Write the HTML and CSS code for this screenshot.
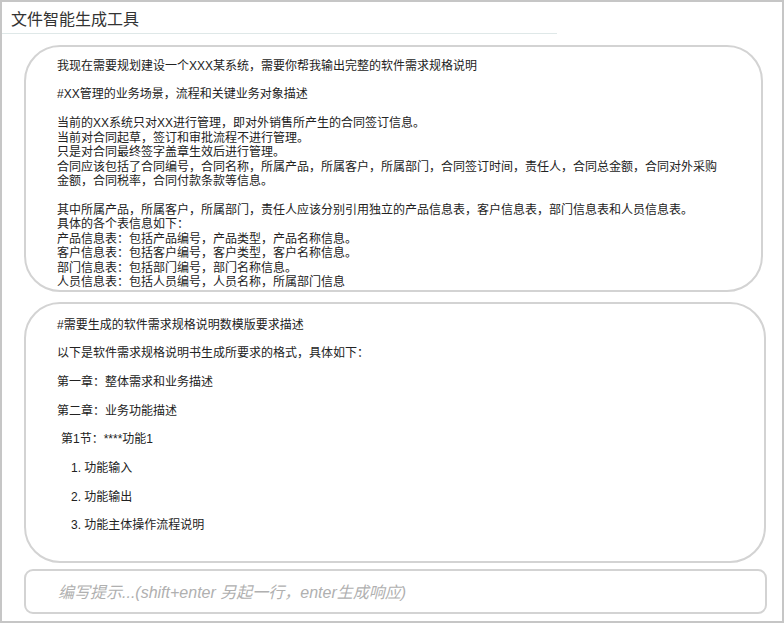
FILE: index.html
```html
<!DOCTYPE html>
<html lang="zh-CN">
<head>
<meta charset="utf-8">
<title>文件智能生成工具</title>
<link rel="stylesheet" href="styles.css">
</head>
<body>
<div class="app">
  <header class="header"><h1 class="title">文件智能生成工具</h1></header>
  <main class="chat">
    <section class="bubble bubble-first">
      <p>我现在需要规划建设一个XXX某系统，需要你帮我输出完整的软件需求规格说明</p>
      <p>#XX管理的业务场景，流程和关键业务对象描述</p>
      <p>当前的XX系统只对XX进行管理，即对外销售所产生的合同签订信息。<br>当前对合同起草，签订和审批流程不进行管理。<br>只是对合同最终签字盖章生效后进行管理。<br>合同应该包括了合同编号，合同名称，所属产品，所属客户，所属部门，合同签订时间，责任人，合同总金额，合同对外采购金额，合同税率，合同付款条款等信息。</p>
      <p>其中所属产品，所属客户，所属部门，责任人应该分别引用独立的产品信息表，客户信息表，部门信息表和人员信息表。<br>具体的各个表信息如下：<br>产品信息表：包括产品编号，产品类型，产品名称信息。<br>客户信息表：包括客户编号，客户类型，客户名称信息。<br>部门信息表：包括部门编号，部门名称信息。<br>人员信息表：包括人员编号，人员名称，所属部门信息</p>
    </section>
    <section class="bubble bubble-second">
      <p>#需要生成的软件需求规格说明数模版要求描述</p>
      <p>以下是软件需求规格说明书生成所要求的格式，具体如下：</p>
      <p>第一章：整体需求和业务描述</p>
      <p>第二章：业务功能描述</p>
      <p class="sub">第1节：****功能1</p>
      <p class="item">1. 功能输入</p>
      <p class="item">2. 功能输出</p>
      <p class="item">3. 功能主体操作流程说明</p>
    </section>
    <div class="prompt">编写提示...(shift+enter 另起一行，enter生成响应)</div>
  </main>
</div>
</body>
</html>
```
FILE: styles.css
```css
html, body {
  margin: 0;
  padding: 0;
  background: #ffffff;
}
.app {
  width: 784px;
  height: 623px;
  box-sizing: border-box;
  border: 2px solid #c6c6c6;
  font-family: "Liberation Sans", "Noto Sans CJK SC", sans-serif;
  color: #222;
  display: flex;
  flex-direction: column;
}
.header {
  flex-shrink: 0;
  width: 555px;
  height: 32px;
  box-sizing: border-box;
  border-bottom: 1px solid #dfe8e8;
  padding-left: 9px;
  display: flex;
  align-items: center;
}
.title {
  margin: 0;
  font-size: 16px;
  font-weight: normal;
  color: #333;
  line-height: 20px;
  font-family: "Noto Sans CJK SC", sans-serif;
}
.chat {
  flex-shrink: 0;
  display: flex;
  flex-direction: column;
  padding: 11px 0 0 22px;
}
.bubble {
  flex-shrink: 0;
  border: 2px solid #d3d3d3;
  border-radius: 36px;
  box-sizing: border-box;
  font-size: 12px;
  line-height: 14.45px;
}
.bubble p {
  margin: 0;
}
.bubble-first {
  width: 739px;
  padding: 11.5px 40px 0 31px;
}
.bubble-first p + p {
  margin-top: 14.45px;
}
.bubble-second {
  width: 742px;
  margin-top: 10px;
  padding: 14px 40px 28px 31px;
  display: flex;
  flex-direction: column;
  gap: 14.2px;
}
.bubble-second .sub {
  padding-left: 4px;
}
.bubble-second .item {
  padding-left: 14px;
}
.prompt {
  flex-shrink: 0;
  width: 743px;
  height: 45px;
  margin-top: 6px;
  box-sizing: border-box;
  border: 2px solid #d3d3d3;
  border-radius: 9px;
  padding-left: 32px;
  display: flex;
  align-items: center;
  font-size: 16px;
  font-style: italic;
  color: #b0b0b0;
}
```
